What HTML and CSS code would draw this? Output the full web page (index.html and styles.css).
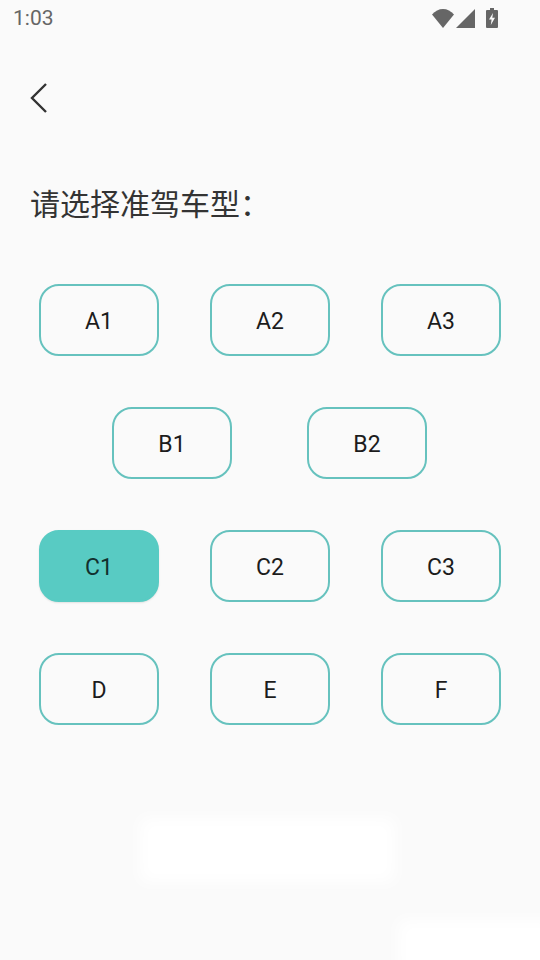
FILE: index.html
```html
<!DOCTYPE html>
<html lang="zh-CN">
<head>
    <meta charset="UTF-8">
    <meta name="viewport" content="width=device-width, initial-scale=1.0">
    <title>请选择准驾车型</title>
    <link rel="stylesheet" href="styles.css">
</head>
<body>
    <div class="status-bar">
        <span class="time">1:03</span>
        <div class="status-icons">
            <svg class="icon-wifi" width="22" height="19" viewBox="0 0 22 19"><path d="M0 5.5C3 2 7 0 11 0s8 2 11 5.5L11 19z" fill="#666"/></svg>
            <svg class="icon-signal" width="19" height="19" viewBox="0 0 19 19"><path d="M0 19L19 0v19z" fill="#666"/></svg>
            <svg class="icon-battery" width="12" height="20" viewBox="0 0 12 20"><path fill-rule="evenodd" d="M4 0h4v2h3a1 1 0 0 1 1 1v16a1 1 0 0 1-1 1H1a1 1 0 0 1-1-1V3a1 1 0 0 1 1-1h3zM7 5L3 11.5h2.6L4.8 17 9 9.800H6.300z" fill="#666"/></svg>
        </div>
    </div>

    <div class="nav">
        <svg width="20" height="32" viewBox="0 0 20 32"><path d="M17 2L3 16l14 14" fill="none" stroke="#333" stroke-width="2.400"/></svg>
    </div>

    <h1 class="title">请选择准驾车型：</h1>

    <div class="rows">
        <div class="row">
            <div class="item">A1</div>
            <div class="item">A2</div>
            <div class="item">A3</div>
        </div>
        <div class="row row-wide">
            <div class="item">B1</div>
            <div class="item">B2</div>
        </div>
        <div class="row">
            <div class="item active">C1</div>
            <div class="item">C2</div>
            <div class="item">C3</div>
        </div>
        <div class="row">
            <div class="item">D</div>
            <div class="item">E</div>
            <div class="item">F</div>
        </div>
    </div>

    <!-- faint white patches near the bottom of the screen -->
    <div class="patch patch-center"></div>
    <div class="patch patch-corner"></div>
</body>
</html>
```

FILE: styles.css
```css
html, body {
    height: 100%;
}
body {
    margin: 0;
    height: 960px;
    overflow: hidden;
    position: relative;
    background-color: #fafafa;
    font-family: Roboto, "Noto Sans CJK SC", sans-serif;
    color: #1c1c1c;
}
.status-bar {
    height: 36px;
    padding: 0 42px 0 13px;
    display: flex;
    justify-content: space-between;
    align-items: center;
}
.time {
    font-size: 21px;
    color: #666;
}
.status-icons {
    display: flex;
    align-items: center;
    gap: 2px;
}
.icon-battery {
    margin-left: 9px;
}
.nav {
    height: 32px;
    margin-top: 46px;
    padding-left: 29px;
}
.title {
    margin: 67px 0 0 30px;
    height: 48px;
    font-size: 30px;
    line-height: 48px;
    font-weight: normal;
    color: #333;
}
.rows {
    margin-top: 55px;
    display: flex;
    flex-direction: column;
    gap: 51px;
}
.row {
    display: flex;
    justify-content: center;
    gap: 51px;
}
.row-wide {
    gap: 75px;
    padding-right: 1px;
}
.item {
    width: 120px;
    height: 72px;
    box-sizing: border-box;
    padding-top: 2px;
    border: 2px solid #66c2be;
    border-radius: 20px;
    display: flex;
    justify-content: center;
    align-items: center;
    font-size: 23px;
}
.active {
    background-color: #58cbc3;
    border-color: #58cbc3;
    box-shadow: 0 1px 2px rgba(0, 0, 0, 0.1);
    color: #12302e;
}
.patch {
    position: absolute;
    background-color: #fff;
    filter: blur(8px);
}
.patch-center {
    left: 140px;
    top: 818px;
    width: 255px;
    height: 64px;
}
.patch-corner {
    left: 398px;
    top: 920px;
    width: 160px;
    height: 55px;
}
```
